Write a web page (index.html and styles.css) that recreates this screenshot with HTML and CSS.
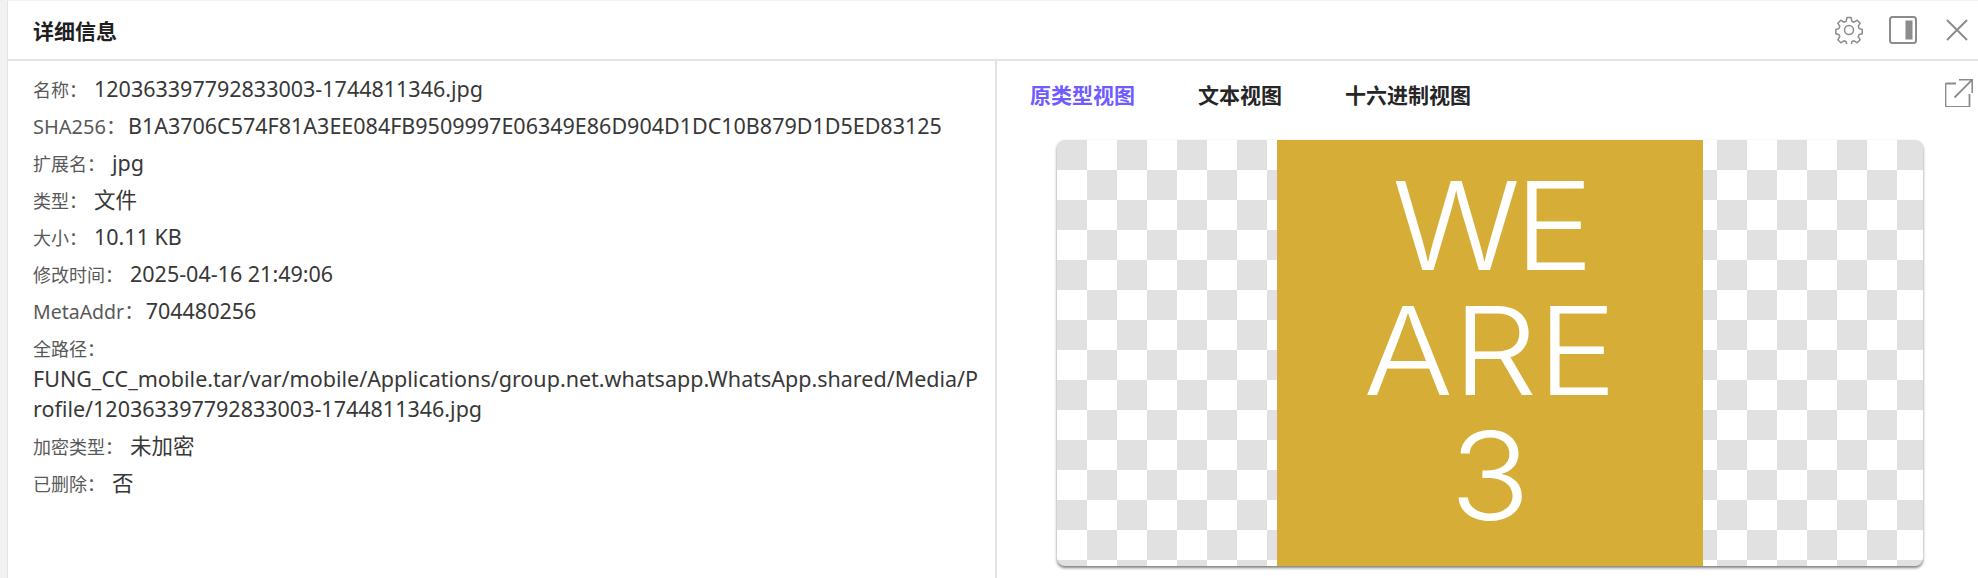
FILE: index.html
```html
<!DOCTYPE html>
<html lang="zh">
<head>
<meta charset="utf-8">
<title>详细信息</title>
<link rel="stylesheet" href="styles.css">
</head>
<body>
<div class="drawer">
  <header class="head">
    <h2 class="title">详细信息</h2>
    <div class="tools">
      <svg class="ic-gear" width="28" height="28" viewBox="0 0 28 28"><path d="M11.900 1.600h4.200l.7 3.600 2.300 1 3.100-2 3 3-2 3.100 1 2.300 3 .9v4.200l-3 .7-1 2.300 2 3.100-3 3-3.100-2-2.300 1-.7 3.600h-4.200l-.7-3.600-2.300-1-3.100 2-3-3 2-3.100-1-2.300-3-.7v-4.200l3-.9 1-2.300-2-3.100 3-3 3.100 2 2.300-1z"/><circle cx="14" cy="14" r="4.500"/></svg>
      <svg class="ic-panel" width="28" height="28" viewBox="0 0 28 28"><rect x="1" y="1" width="26" height="26" rx="2.500"/><rect class="fill" x="16.500" y="4.500" width="7" height="19"/></svg>
      <svg class="ic-close" width="22" height="22" viewBox="0 0 22 22"><path d="M1 1l20 20M21 1L1 21"/></svg>
    </div>
  </header>
  <div class="body">
    <section class="info">
      <div class="row"><span class="k">名称：</span><span class="v">120363397792833003-1744811346.jpg</span></div>
      <div class="row"><span class="k latin">SHA256：</span><span class="v">B1A3706C574F81A3EE084FB9509997E06349E86D904D1DC10B879D1D5ED83125</span></div>
      <div class="row"><span class="k">扩展名：</span><span class="v">jpg</span></div>
      <div class="row"><span class="k">类型：</span><span class="v">文件</span></div>
      <div class="row"><span class="k">大小：</span><span class="v">10.11 KB</span></div>
      <div class="row"><span class="k">修改时间：</span><span class="v">2025-04-16 21:49:06</span></div>
      <div class="row"><span class="k latin meta">MetaAddr：</span><span class="v">704480256</span></div>
      <div class="row path"><span class="k">全路径：</span><span class="v">FUNG_CC_mobile.tar/var/mobile/Applications/group.net.whatsapp.WhatsApp.shared/Media/Profile/120363397792833003-1744811346.jpg</span></div>
      <div class="row"><span class="k">加密类型：</span><span class="v">未加密</span></div>
      <div class="row"><span class="k">已删除：</span><span class="v">否</span></div>
    </section>
    <section class="preview">
      <div class="tabs">
        <nav class="tablist">
          <span class="tab active">原类型视图</span>
          <span class="tab">文本视图</span>
          <span class="tab">十六进制视图</span>
        </nav>
        <svg class="ic-open" width="28" height="28" viewBox="0 0 28 28"><path d="M11 4.500H1.500a1 1 0 0 0-1 1V27a.8.8 0 0 0 .8.8h22.400a.8.8 0 0 0 .8-.8V15"/><path d="M9.500 18.500L27.300.7M14 .7h13.300V14"/></svg>
      </div>
      <div class="card">
        <div class="pic"><span class="we">WE</span><span>ARE</span><span>3</span></div>
      </div>
    </section>
  </div>
</div>
</body>
</html>
```
FILE: styles.css
```css
* { box-sizing: border-box; }
html, body { margin: 0; height: 100%; }
body {
  background: #f2f2f2;
  overflow: hidden;
  font-family: "Noto Sans", "Noto Sans CJK SC", sans-serif;
}
.drawer {
  margin: 1px 0 0 7px;
  height: 577px;
  background: #fff;
  border-left: 1px solid #e4e4e4;
  display: flex;
  flex-direction: column;
}
.head {
  height: 60px;
  flex: none;
  border-bottom: 2px solid #e3e3e3;
  display: flex;
  align-items: center;
  padding: 0 10px 1px 25px;
}
.title {
  margin: 3px 0 0;
  font-size: 21px;
  line-height: 30px;
  font-weight: 700;
  color: #1f1f1f;
}
.tools { display: flex; align-items: center; margin-left: auto; }
.ic-panel { margin-left: 26px; }
.ic-close { margin-left: 29px; }
svg { display: block; fill: none; stroke: #8c8c8c; }
.ic-gear { stroke-width: 1.500; stroke-linejoin: round; }
.ic-panel { stroke-width: 2; }
.ic-panel .fill { fill: #8c8c8c; stroke: none; }
.ic-close { stroke-width: 2; }
.ic-open { stroke-width: 1.800; }
.body { flex: 1; display: flex; min-height: 0; }
.info {
  width: 989px;
  flex: none;
  border-right: 2px solid #e3e3e3;
  padding: 9px 12px 0 25px;
}
.row {
  height: 37px;
  line-height: 37px;
  word-break: break-all;
  font-size: 21.500px;
}
.k { font-size: 18px; color: #595959; }
.k.latin { font-size: 20px; margin-right: -5px; }
.k.meta { font-size: 19.500px; }
.v { margin-left: 7px; color: #383838; }
.path { height: auto; line-height: 30px; padding: 5px 0 3px; }
.path .k { display: block; }
.path .v { display: block; margin-left: 0; }
.preview { flex: 1; min-width: 0; display: flex; flex-direction: column; }
.tabs {
  height: 79px;
  flex: none;
  display: flex;
  align-items: flex-start;
  justify-content: space-between;
  padding: 18px 5px 0 33px;
}
.tablist { display: flex; gap: 63px; }
.tab { font-size: 21px; line-height: 32px; font-weight: 700; color: #262626; }
.tab.active { color: #6f5cff; }
.card {
  margin-left: 60px;
  width: 866px;
  height: 426px;
  display: flex;
  justify-content: center;
  border-radius: 8px;
  overflow: hidden;
  box-shadow: 0 2px 3px rgba(0,0,0,.5);
  background-color: #fff;
  background-image: conic-gradient(#fff 25%, #e1e1e1 0 50%, #fff 0 75%, #e1e1e1 0);
  background-size: 60px 60px;
}
.pic {
  width: 426px;
  height: 426px;
  background: #d6ae37;
  color: #fff;
  display: flex;
  flex-direction: column;
  align-items: center;
  padding-top: 23px;
  font-family: Inter, sans-serif;
  font-weight: 260;
  font-size: 122px;
  line-height: 125px;
}
.pic span { transform: scaleX(1.09); }
.pic .we { letter-spacing: -5.500px; }
```
